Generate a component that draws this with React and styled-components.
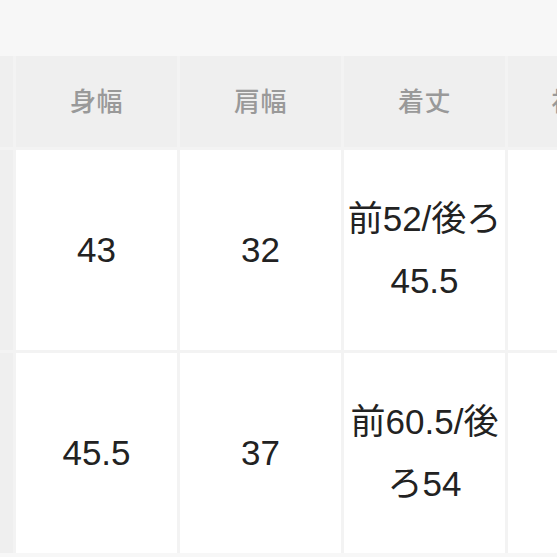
import React, { useLayoutEffect, useRef } from "react";
import styled, { createGlobalStyle } from "styled-components";

const GlobalStyle = createGlobalStyle`
  html, body {
    margin: 0;
    padding: 0;
    background: #ffffff;
    overflow: hidden;
  }
  body {
    font-family: "Liberation Sans", "Noto Sans CJK JP", sans-serif;
  }
`;

const Page = styled.div`
  width: 557px;
  height: 557px;
  display: flex;
  flex-direction: column;
  background: #f7f7f7;
`;

const TopBand = styled.div`
  height: 56px;
  flex-shrink: 0;
  background: #f7f7f7;
`;

const Scroller = styled.div`
  flex: 1;
  overflow-x: auto;
  overflow-y: hidden;
  scrollbar-width: none;
  &::-webkit-scrollbar {
    display: none;
  }
`;

const Grid = styled.div`
  display: grid;
  grid-template-columns: 120px repeat(3, 161px) 140px 161px;
  grid-template-rows: 91px 200px 200px;
  gap: 3px;
  width: max-content;
  background: #f3f3f3;
`;

const HeadCell = styled.div`
  display: flex;
  align-items: center;
  justify-content: center;
  padding-bottom: 4px;
  background: #efefef;
  color: #999999;
  font-family: "Noto Sans CJK JP", sans-serif;
  font-size: 26px;
  font-weight: 500;
  letter-spacing: 0.5px;
`;

const SideCell = styled(HeadCell)`
  background: #efefef;
`;

const Cell = styled.div`
  display: flex;
  align-items: center;
  justify-content: center;
  padding: 0 2px;
  background: #ffffff;
  color: #222222;
  font-size: 35px;
  line-height: 62px;
  text-align: center;
`;

const headers = ["身幅", "肩幅", "着丈", "袖丈", "総丈"];

const rows = [
  { size: "M", values: ["43", "32", "前52/後ろ45.5", "18", "-"] },
  { size: "L", values: ["45.5", "37", "前60.5/後ろ54", "20", "-"] },
];

export default function App() {
  const scrollRef = useRef(null);

  useLayoutEffect(() => {
    if (scrollRef.current) scrollRef.current.scrollLeft = 107;
  }, []);

  return (
    <Page>
      <GlobalStyle />
      <TopBand />
      <Scroller ref={scrollRef}>
        <Grid>
          <SideCell>サイズ</SideCell>
          {headers.map((h) => (
            <HeadCell key={h}>{h}</HeadCell>
          ))}
          {rows.map((row) => (
            <React.Fragment key={row.size}>
              <SideCell>{row.size}</SideCell>
              {row.values.map((v, i) => (
                <Cell key={i}>{v}</Cell>
              ))}
            </React.Fragment>
          ))}
        </Grid>
      </Scroller>
    </Page>
  );
}
